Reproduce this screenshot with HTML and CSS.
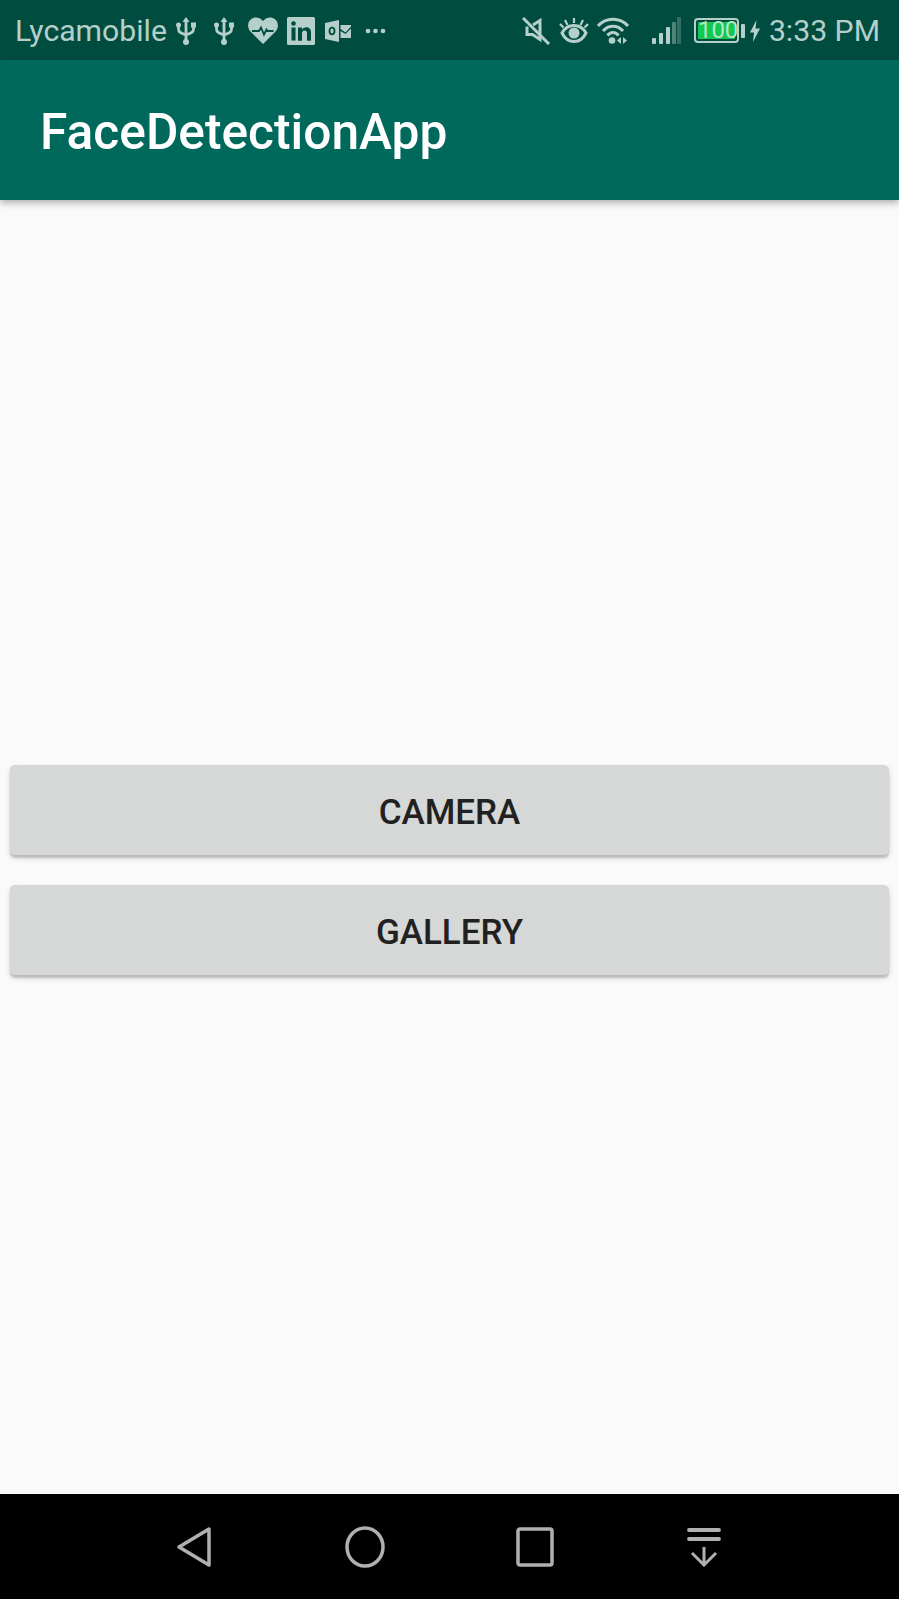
FILE: index.html
```html
<!DOCTYPE html>
<html lang="en">
<head>
  <meta charset="UTF-8">
  <meta name="viewport" content="width=device-width, initial-scale=1.0">
  <title>FaceDetectionApp</title>
  <link rel="stylesheet" href="styles.css">
</head>
<body>
  <div class="status-bar">
    <div class="status-left">
      <span class="carrier">Lycamobile</span>
      <svg class="icon icon-usb" viewBox="0 0 20 28"><use href="#usb"/></svg>
      <svg class="icon icon-usb-two" viewBox="0 0 20 28"><use href="#usb"/></svg>
      <svg class="icon icon-heart" viewBox="0 0 30 27">
        <path d="M15 27 2.5 14.5C-1 10.500-.5 5 3 2.300 6.500-.5 11.500 0 15 4 18.500 0 23.500-.5 27 2.300 30.500 5 31 10.500 27.500 14.500Z" fill="#b5d0ca"/>
        <path d="M4 14h7l2-3.500 3 7 2.500-5 1 1.500h6" fill="none" stroke="#004d40" stroke-width="1.800"/>
      </svg>
      <svg class="icon icon-linkedin" viewBox="0 0 28 28">
        <rect width="28" height="28" rx="1.500" fill="#b5d0ca"/>
        <rect x="4.500" y="10.500" width="4" height="13" fill="#004d40"/>
        <circle cx="6.500" cy="6.500" r="2.300" fill="#004d40"/>
        <path d="M11 10.500h4v2c1-1.500 2.500-2.300 4.300-2.300 3.500 0 4.700 2.300 4.700 5.500v8h-4v-7.200c0-1.800-.6-3-2.300-3-1.800 0-2.700 1.300-2.700 3v7.200h-4Z" fill="#004d40"/>
      </svg>
      <svg class="icon icon-outlook" viewBox="0 0 26 22">
        <path d="M0 3 14 0v22L0 19Z" fill="#b5d0ca"/>
        <ellipse cx="7" cy="11" rx="2.500" ry="3.300" fill="none" stroke="#004d40" stroke-width="1.800"/>
        <path d="M15.500 5H26v1.500l-5.500 6-5-3.500Z M15.500 11l5 3L26 8.500V18H15.500Z" fill="#b5d0ca"/>
      </svg>
      <svg class="icon icon-dots" viewBox="0 0 21 6">
        <circle cx="3" cy="3" r="2.300" fill="#b5d0ca"/>
        <circle cx="10.500" cy="3" r="2.300" fill="#b5d0ca"/>
        <circle cx="18" cy="3" r="2.300" fill="#b5d0ca"/>
      </svg>
    </div>
    <div class="status-right">
      <svg class="icon icon-mute" viewBox="0 0 28 28">
        <path d="M5 9.500v8h5.500l7.500 5V3.500L11 8" fill="none" stroke="#b5d0ca" stroke-width="3"/>
        <path d="M1 1 27 27" stroke="#b5d0ca" stroke-width="3"/>
      </svg>
      <svg class="icon icon-eye" viewBox="0 0 30 25">
        <path d="M3 15C6 9.500 10 7.500 15 7.500S24 9.500 27 15C24 21 20 23.500 15 23.500S6 21 3 15Z" fill="none" stroke="#b5d0ca" stroke-width="3"/>
        <circle cx="15" cy="15" r="5.500" fill="#b5d0ca"/>
        <path d="M15 0v5M6 2 8.500 7M24 2 21.500 7M1 6l3.500 3.500M29 6l-3.500 3.500" stroke="#b5d0ca" stroke-width="2.200"/>
      </svg>
      <svg class="icon icon-wifi" viewBox="0 0 32 27">
        <path d="M1 9C9 0 23 0 31 9M6 14C11.500 7.500 20.500 7.500 26 14M10.500 18.500C13.500 14.500 18.500 14.500 21.500 18.500" fill="none" stroke="#b5d0ca" stroke-width="3"/>
        <circle cx="15" cy="23.500" r="3.300" fill="#b5d0ca"/>
        <path d="M24 20v7l-4-3.500ZM26 20v7l4-3.500Z" fill="#b5d0ca"/>
      </svg>
      <svg class="icon icon-signal" viewBox="0 0 29 27">
        <rect x="0" y="21" width="4" height="6" rx="1" fill="#b5d0ca"/>
        <rect x="7" y="16" width="4" height="11" rx="1" fill="#b5d0ca"/>
        <rect x="14" y="10" width="4" height="17" rx="1" fill="#b5d0ca"/>
        <rect x="20" y="5" width="4" height="22" rx="1" fill="#4f8579"/>
        <rect x="25" y="0" width="4" height="27" rx="1" fill="#356f63"/>
      </svg>
      <div class="battery"><span class="battery-level">100</span></div>
      <span class="battery-tip"></span>
      <svg class="icon icon-bolt" viewBox="0 0 10 22">
        <path d="M6.500 0 0 12.500h4L3 22 10 8.500H5.500Z" fill="#b5d0ca"/>
      </svg>
      <span class="clock">3:33 PM</span>
    </div>
  </div>

  <header class="app-bar">FaceDetectionApp</header>

  <main class="content">
    <button class="action-btn">CAMERA</button>
    <button class="action-btn">GALLERY</button>
  </main>

  <nav class="nav-bar">
    <svg class="nav-icon nav-back" viewBox="0 0 36 42">
      <path d="M33 3 3 21 33 39Z" fill="none" stroke="#b0b0b0" stroke-width="3.500" stroke-linejoin="round"/>
    </svg>
    <svg class="nav-icon nav-home" viewBox="0 0 40 42">
      <ellipse cx="20" cy="21" rx="18" ry="19" fill="none" stroke="#b0b0b0" stroke-width="3.500"/>
    </svg>
    <svg class="nav-icon nav-recent" viewBox="0 0 38 40">
      <rect x="2" y="2" width="34" height="36" rx="2" fill="none" stroke="#b0b0b0" stroke-width="3.500"/>
    </svg>
    <svg class="nav-icon nav-down" viewBox="0 0 34 40">
      <path d="M2 3h30M2 12h30" stroke="#b0b0b0" stroke-width="3.800" stroke-linecap="round"/>
      <path d="M17 20v18M5 26l12 12 12-12" fill="none" stroke="#b0b0b0" stroke-width="3"/>
    </svg>
  </nav>

  <svg class="defs" aria-hidden="true">
    <symbol id="usb" viewBox="0 0 20 28">
      <path d="M10 2v24M2.500 8v4c0 3 2 4 7.500 6 5.500-2 7.500-3 7.500-6V8" fill="none" stroke="#b5d0ca" stroke-width="2.800"/>
      <path d="M10 0l3.500 5h-7Z" fill="#b5d0ca"/>
      <circle cx="10" cy="25" r="3" fill="#b5d0ca"/>
      <circle cx="2.500" cy="8" r="2.500" fill="#b5d0ca"/>
      <rect x="15" y="5.500" width="5" height="5" fill="#b5d0ca"/>
    </symbol>
  </svg>
</body>
</html>
```

FILE: styles.css
```css
html, body {
  margin: 0;
  padding: 0;
}
body {
  width: 899px;
  height: 1599px;
  display: flex;
  flex-direction: column;
  background-color: #fafafa;
  font-family: Roboto, "Noto Sans", sans-serif;
  overflow: hidden;
}
.defs {
  display: none;
}

/* status bar */
.status-bar {
  height: 60px;
  flex-shrink: 0;
  display: flex;
  justify-content: space-between;
  align-items: center;
  background-color: #004d40;
  color: #b5d0ca;
  font-size: 30.200px;
  padding: 1px 19px 0 15px;
  box-sizing: border-box;
}
.status-left, .status-right {
  display: flex;
  align-items: center;
}
.icon {
  display: block;
  flex-shrink: 0;
}
.icon-usb { width: 20px; height: 28px; margin-left: 9px; }
.icon-usb-two { width: 20px; height: 28px; margin-left: 18px; }
.icon-heart { width: 30px; height: 27px; margin-left: 14px; }
.icon-linkedin { width: 28px; height: 28px; margin-left: 9px; }
.icon-outlook { width: 26px; height: 22px; margin-left: 10px; }
.icon-dots { width: 21px; height: 6px; margin-left: 14px; }

.icon-mute { width: 28px; height: 28px; }
.icon-eye { width: 30px; height: 25px; margin-left: 9px; }
.icon-wifi { width: 32px; height: 27px; margin-left: 8px; }
.icon-signal { width: 29px; height: 27px; margin-left: 23px; }
.battery {
  width: 45px;
  height: 25px;
  box-sizing: border-box;
  margin-left: 13px;
  padding: 2px;
  border: 2px solid #b5d0ca;
  border-radius: 4px;
}
.battery-level {
  display: block;
  height: 100%;
  background-color: #12c850;
  color: #b5e6c5;
  font-size: 24px;
  line-height: 17px;
  text-align: center;
  border-radius: 1px;
}
.battery-tip {
  width: 4px;
  height: 14px;
  margin-left: 2px;
  background-color: #b5d0ca;
  border-radius: 1px;
}
.icon-bolt { width: 10px; height: 22px; margin-left: 5px; }
.clock { margin-left: 9px; }

/* app bar */
.app-bar {
  height: 140px;
  flex-shrink: 0;
  display: flex;
  align-items: center;
  box-sizing: border-box;
  padding: 3px 0 0 40px;
  background-color: #00695c;
  color: #fff;
  font-size: 49.700px;
  font-weight: 500;
  box-shadow: 0 3px 7px rgba(0, 0, 0, 0.3);
  position: relative;
}

/* buttons */
.content {
  flex: 1;
  padding: 565px 10px 0;
  display: flex;
  flex-direction: column;
  gap: 30px;
}
.action-btn {
  height: 90px;
  border: none;
  border-radius: 5px;
  padding: 5px 0 0;
  background-color: #d6d7d7;
  color: #212121;
  font-family: Roboto, "Noto Sans", sans-serif;
  font-size: 35px;
  font-weight: 500;
  box-shadow: 0 3px 2px rgba(0, 0, 0, 0.16), 0 3px 6px rgba(0, 0, 0, 0.14);
}

/* navigation bar */
.nav-bar {
  height: 105px;
  flex-shrink: 0;
  display: flex;
  align-items: center;
  background-color: #000;
  padding-left: 176px;
}
.nav-icon {
  display: block;
  flex-shrink: 0;
}
.nav-back { width: 36px; height: 42px; }
.nav-home { width: 40px; height: 42px; margin-left: 133px; }
.nav-recent { width: 38px; height: 40px; margin-left: 131px; }
.nav-down { width: 34px; height: 40px; margin-left: 133px; }
```
